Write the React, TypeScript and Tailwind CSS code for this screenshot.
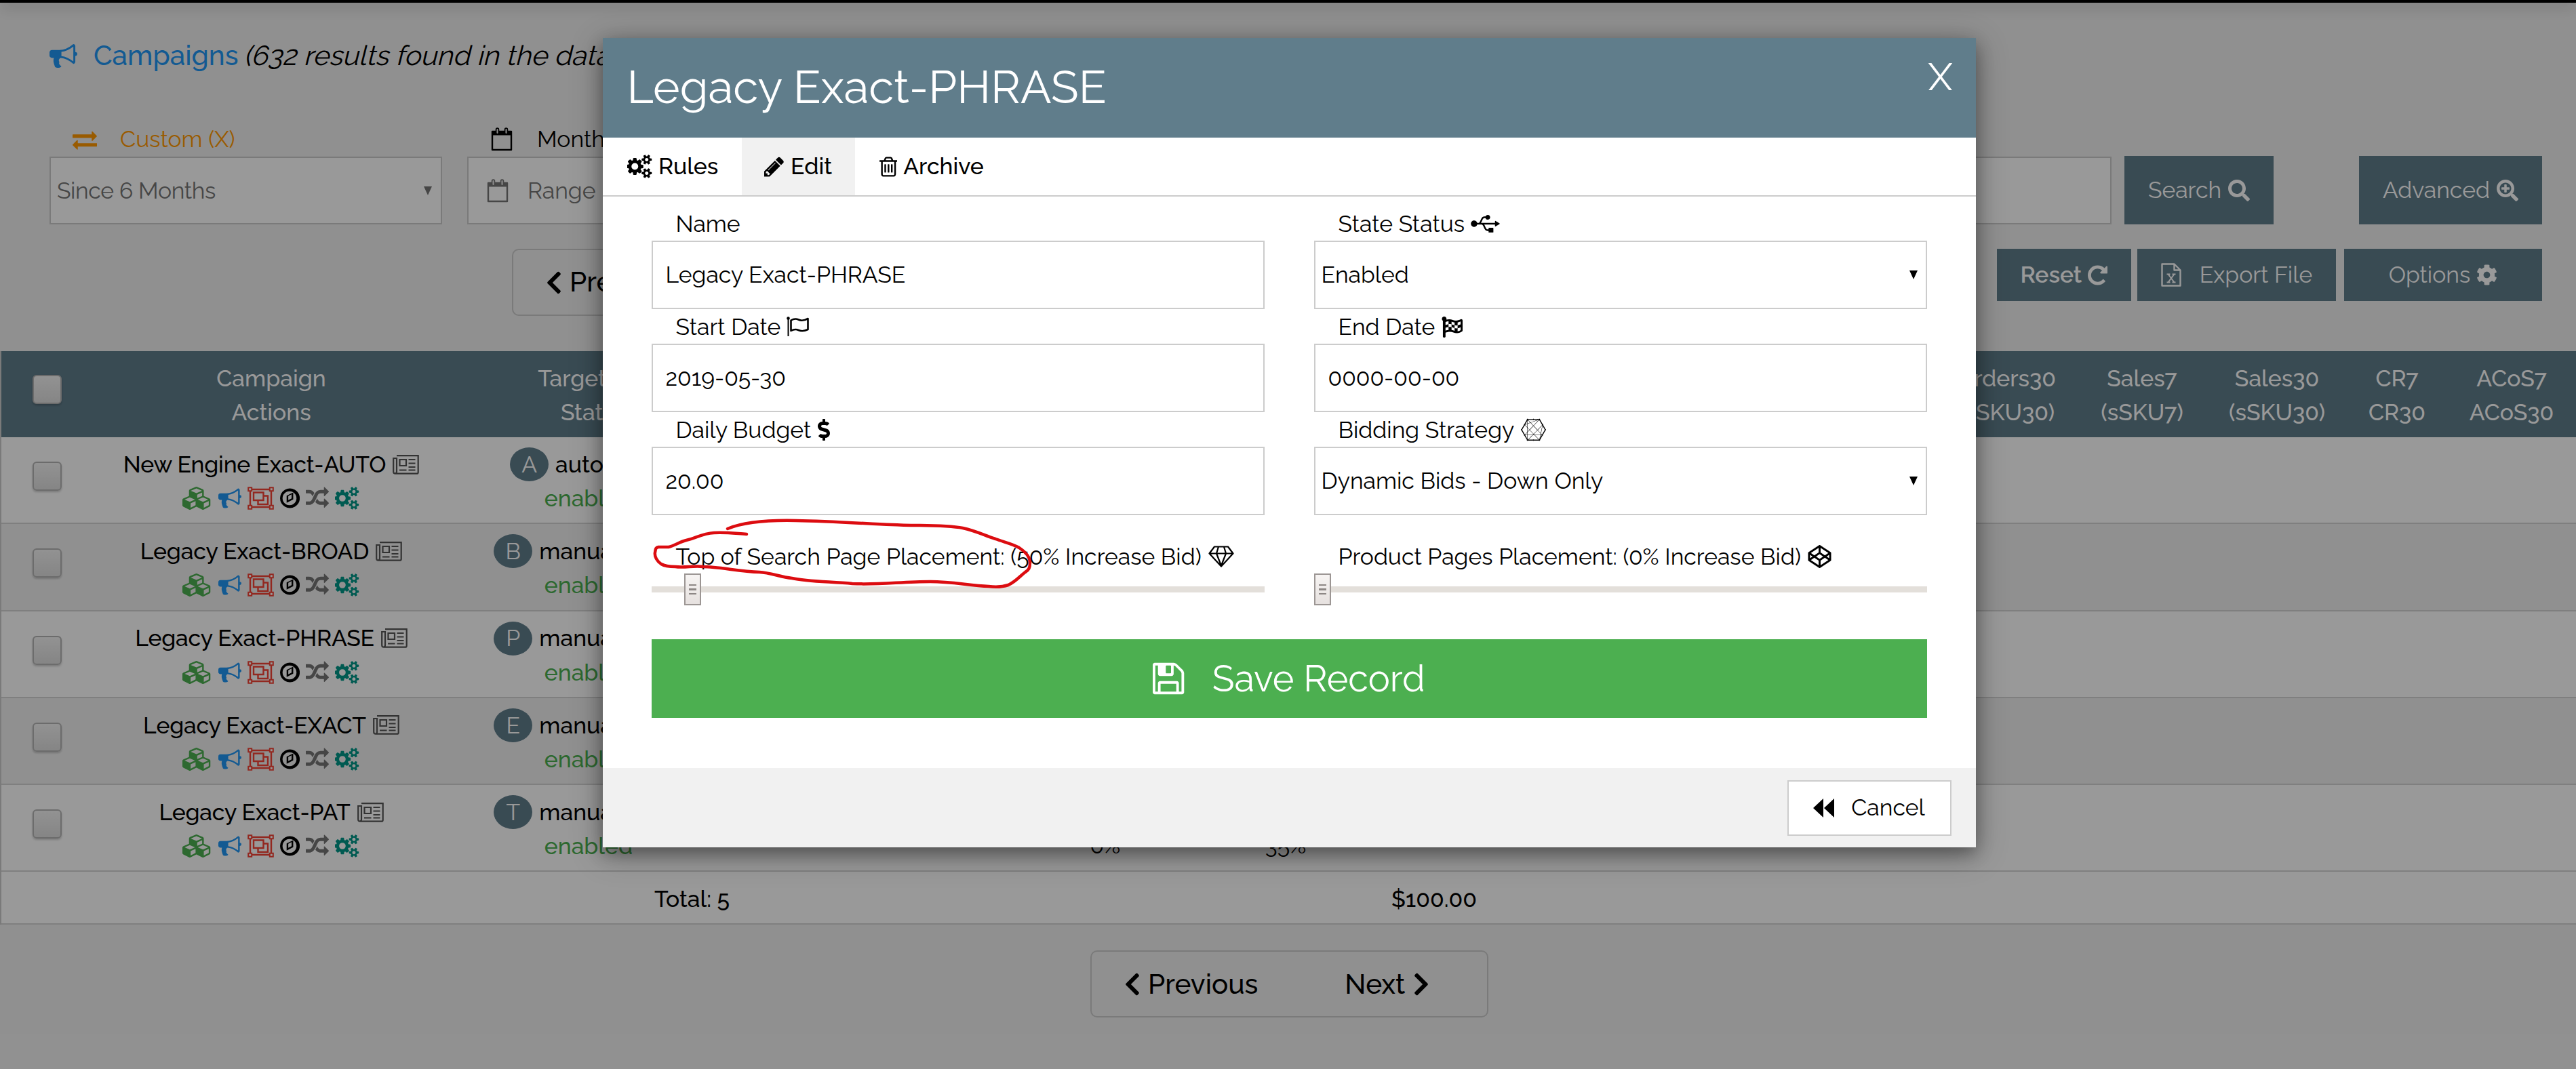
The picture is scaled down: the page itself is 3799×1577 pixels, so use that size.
import React from 'react';
import clsx from 'clsx';
import {
  FaChevronLeft,
  FaChevronRight,
  FaCodepen,
  FaCog,
  FaConnectdevelop,
  FaDollarSign,
  FaFlagCheckered,
  FaSearch,
  FaSearchPlus,
  FaUsb,
} from 'react-icons/fa';

const glyphs = {
  bullhorn: {
    box: '0 0 1792 1792',
    d: 'M1664 640q53 0 90.500 37.500t37.500 90.500-37.500 90.500-90.500 37.500v384q0 52-38 90t-90 38q-417-347-812-380-58 19-91 66t-31 100.500 40 92.500q-20 33-23 65.500t6 58 33.500 55 48 50 61.500 50.500q-29 58-111.500 83t-168.500 11.500-132-55.500q-7-23-29.500-87.500t-32-94.500-23-89-15-101 3.500-98.500 22-110.500h-122q-66 0-113-47t-47-113v-192q0-66 47-113t113-47h480q435 0 896-384 52 0 90 38t38 90v384zm-128 604v-954q-394 302-768 343v270q377 42 768 341z',
  },
  exchange: {
    box: '0 0 1792 1792',
    d: 'M1792 1184v192q0 13-9.500 22.500t-22.500 9.500h-1376v192q0 13-9.500 22.500t-22.500 9.500q-12 0-24-10l-319-320q-9-9-9-22 0-14 9-23l320-320q9-9 23-9 13 0 22.500 9.500t9.500 22.500v192h1376q13 0 22.500 9.500t9.500 22.500zm0-544q0 14-9 23l-320 320q-9 9-23 9-13 0-22.500-9.500t-9.500-22.500v-192h-1376q-13 0-22.500-9.500t-9.500-22.500v-192q0-13 9.500-22.500t22.500-9.500h1376v-192q0-14 9-23t23-9q12 0 24 10l319 319q9 9 9 23z',
  },
  cubes: {
    box: '0 0 2304 1792',
    d: 'M640 1632l384-192v-314l-384 164v342zm-64-454l404-173-404-173-404 173zm1088 454l384-192v-314l-384 164v342zm-64-454l404-173-404-173-404 173zm-448-293l384-165v-266l-384 164v267zm-64-379l441-189-441-189-441 189zm1088 518v416q0 36-19 67t-52 47l-448 224q-25 14-57 14t-57-14l-448-224q-4-2-7-4-2 2-7 4l-448 224q-25 14-57 14t-57-14l-448-224q-33-16-52-47t-19-67v-416q0-38 21.500-70t56.500-48l434-186v-400q0-38 21.500-70t56.500-48l448-192q23-10 50-10t50 10l448 192q35 16 56.500 48t21.500 70v400l434 186q36 16 57 48t21 70z',
  },
  cogs: {
    box: '0 0 1920 1792',
    d: 'M832 896q0-106-75-181t-181-75-181 75-75 181 75 181 181 75 181-75 75-181zm768 512q0-52-38-90t-90-38-90 38-38 90q0 53 37.500 90.500t90.500 37.500 90.500-37.500 37.500-90.500zm0-1024q0-52-38-90t-90-38-90 38-38 90q0 53 37.500 90.500t90.500 37.500 90.500-37.500 37.500-90.500zm-384 421v185q0 10-7 19.500t-16 10.500l-155 24q-11 35-32 76 34 48 90 115 7 11 7 20 0 12-7 19-23 30-82.500 89.500t-78.500 59.500q-11 0-21-7l-115-90q-37 19-77 31-11 108-23 155-7 24-30 24h-186q-11 0-20-7.500t-10-17.500l-23-153q-34-10-75-31l-118 89q-7 7-20 7-11 0-21-8-144-133-144-160 0-9 7-19 10-14 41-53t47-61q-23-44-35-82l-152-24q-10-1-17-9.500t-7-19.500v-185q0-10 7-19.500t16-10.500l155-24q11-35 32-76-34-48-90-115-7-11-7-20 0-12 7-20 22-30 82-89t79-59q11 0 21 7l115 90q34-18 77-32 11-108 23-154 7-24 30-24h186q11 0 20 7.500t10 17.500l23 153q34 10 75 31l118-89q8-7 20-7 11 0 21 8 144 133 144 160 0 8-7 19-12 16-42 54t-45 60q23 48 34 82l152 23q10 2 17 10.500t7 19.500zm640 533v140q0 16-149 31-12 27-30 52 51 113 51 138 0 4-4 7-122 71-124 71-8 0-46-47t-52-68q-20 2-30 2t-30-2q-14 21-52 68t-46 47q-2 0-124-71-4-3-4-7 0-25 51-138-18-25-30-52-149-15-149-31v-140q0-16 149-31 13-29 30-52-51-113-51-138 0-4 4-7 4-2 35-20t59-34 30-16q8 0 46 46.500t52 67.500q20-2 30-2t30 2q51-71 92-112l6-2q4 0 124 70 4 3 4 7 0 25-51 138 17 23 30 52 149 15 149 31zm0-1024v140q0 16-149 31-12 27-30 52 51 113 51 138 0 4-4 7-122 71-124 71-8 0-46-47t-52-68q-20 2-30 2t-30-2q-14 21-52 68t-46 47q-2 0-124-71-4-3-4-7 0-25 51-138-18-25-30-52-149-15-149-31v-140q0-16 149-31 13-29 30-52-51-113-51-138 0-4 4-7 4-2 35-20t59-34 30-16q8 0 46 46.500t52 67.500q20-2 30-2t30 2q51-71 92-112l6-2q4 0 124 70 4 3 4 7 0 25-51 138 17 23 30 52 149 15 149 31z',
  },
  compass: {
    box: '128 0 1536 1792',
    d: 'M768 1042l256-128v-316l-256 128v316zm384-594v542l-512 256v-542zm256 448q0-148-73-273t-198-198-273-73-273 73-198 198-73 273 73 273 198 198 273 73 273-73 198-198 73-273zm256 0q0 209-103 385.500t-279.500 279.500-385.500 103-385.500-103-279.500-279.500-103-385.500 103-385.500 279.500-279.500 385.500-103 385.500 103 279.500 279.500 103 385.500z',
  },
  random: {
    box: '0 0 1792 1792',
    d: 'M666 481q-60 92-137 273-22-45-37-72.500t-40.500-63.500-51-56.500-63-35-81.500-14.500h-224q-14 0-23-9t-9-23v-192q0-14 9-23t23-9h224q250 0 410 225zm1126 799q0 14-9 23l-320 320q-9 9-23 9-13 0-22.500-9.500t-9.500-22.500v-192q-32 0-85 .5t-81 1-73-1-71-5-64-10.500-63-18.500-58-28.500-59-40-55-53.500-56-69.500q59-93 136-273 22 45 37 72.500t40.500 63.500 51 56.500 63 35 81.500 14.500h256v-192q0-14 9-23t23-9q12 0 24 10l319 319q9 9 9 23zm0-896q0 14-9 23l-320 320q-9 9-23 9-13 0-22.500-9.500t-9.500-22.500v-192h-256q-48 0-87 15t-69 45-51 61.500-45 77.500q-32 62-78 171-29 66-49.500 111t-54 105-64 100-74 83-90 68.500-106.500 42-128 16.500h-224q-14 0-23-9t-9-23v-192q0-14 9-23t23-9h224q48 0 87-15t69-45 51-61.500 45-77.500q32-62 78-171 29-66 49.500-111t54-105 64-100 74-83 90-68.500 106.500-42 128-16.500h256v-192q0-14 9-23t23-9q12 0 24 10l319 319q9 9 9 23z',
  },
  repeat: {
    box: '128 0 1536 1792',
    d: 'M1664 256v448q0 26-19 45t-45 19h-448q-42 0-59-40-17-39 14-69l138-138q-148-137-349-137-104 0-198.500 40.500t-163.500 109.500-109.500 163.500-40.500 198.500 40.500 198.500 109.500 163.500 163.500 109.500 198.500 40.500q119 0 225-52t179-147q7-10 23-12 15 0 25 9l137 138q9 8 9.500 20.500t-7.500 22.500q-109 132-264 204.500t-327 72.500q-156 0-298-61t-245-164-164-245-61-298 61-298 164-245 245-164 298-61q147 0 284.500 55.500t244.500 156.500l130-129q29-31 70-14 39 17 39 59z',
  },
  pencil: {
    box: '128 0 1536 1792',
    d: 'M491 1536l91-91-235-235-91 91v107h128v128h107zm523-928q0-22-22-22-10 0-17 7l-542 542q-7 7-7 17 0 22 22 22 10 0 17-7l542-542q7-7 7-17zm-54-192l416 416-832 832h-416v-416zm683 96q0 53-37 90l-166 166-416-416 166-165q36-38 90-38 53 0 91 38l235 234q37 39 37 91z',
  },
  trash: {
    box: '192 0 1408 1792',
    d: 'M704 736v576q0 14-9 23t-23 9h-64q-14 0-23-9t-9-23v-576q0-14 9-23t23-9h64q14 0 23 9t9 23zm256 0v576q0 14-9 23t-23 9h-64q-14 0-23-9t-9-23v-576q0-14 9-23t23-9h64q14 0 23 9t9 23zm256 0v576q0 14-9 23t-23 9h-64q-14 0-23-9t-9-23v-576q0-14 9-23t23-9h64q14 0 23 9t9 23zm128 724v-948h-896v948q0 22 7 40.500t14.500 27 10.500 8.500h832q3 0 10.500-8.500t14.500-27 7-40.500zm-672-1076h448l-48-117q-7-9-17-11h-317q-10 2-17 11zm928 32v64q0 14-9 23t-23 9h-96v948q0 83-47 143.500t-113 60.500h-832q-66 0-113-58.500t-47-141.500v-952h-96q-14 0-23-9t-9-23v-64q0-14 9-23t23-9h309l70-167q15-37 54-63t79-26h320q40 0 79 26t54 63l70 167h309q14 0 23 9t9 23z',
  },
  save: {
    box: '128 0 1536 1792',
    d: 'M512 1536h768v-384h-768v384zm896 0h128v-896q0-14-10-38.500t-20-34.500l-281-281q-10-10-34-20t-39-10v416q0 40-28 68t-68 28h-576q-40 0-68-28t-28-68v-416h-128v1280h128v-416q0-40 28-68t68-28h832q40 0 68 28t28 68v416zm-384-928v-320q0-13-9.500-22.500t-22.500-9.500h-192q-13 0-22.500 9.500t-9.500 22.500v320q0 13 9.500 22.500t22.500 9.500h192q13 0 22.500-9.500t9.500-22.500zm640 32v928q0 40-28 68t-68 28h-1344q-40 0-68-28t-28-68v-1344q0-40 28-68t68-28h928q40 0 88 20t76 48l280 280q28 28 48 76t20 88z',
  },
};

const Glyph = ({ name, className }: { name: keyof typeof glyphs; className?: string }) => (
  <svg viewBox={glyphs[name].box} fill="currentColor" className={clsx('w-auto shrink-0', className || 'h-[34px]')}>
    <path d={glyphs[name].d} />
  </svg>
);

const Newspaper = () => (
  <svg viewBox="0 0 39 29" fill="none" stroke="#555" strokeWidth="2.2" className="w-[39px] h-[29px] shrink-0">
    <path d="M6 1.200h31.700v24.500q0 2-2 2H4q-2.800 0-2.800-3V5H6v19.500q0 3-2.400 3" />
    <path d="M10.500 7h9.500v9h-9.500zM23.500 7h10M23.500 12.500h10M23.500 18h10M10 22.500h10.500M23.500 22.500h10" />
  </svg>
);

const CalendarIcon = () => (
  <svg viewBox="0 0 32 35" className="w-[32px] h-[35px] shrink-0" fill="none" stroke="currentColor">
    <path d="M2 6h28v27H2z" strokeWidth="2.400" strokeLinejoin="round" />
    <path d="M1 5.500h30v6H1z" fill="currentColor" stroke="none" />
    <path d="M9.500 3v5M22.500 3v5" strokeWidth="5.500" strokeLinecap="round" />
    <path d="M9.500 3v5M22.500 3v5" strokeWidth="2" stroke="#eee" strokeLinecap="round" />
  </svg>
);

const ObjectGroup = () => (
  <svg viewBox="0 0 39 34" className="w-[39px] h-[34px] shrink-0" fill="none" stroke="currentColor" strokeWidth="2.400">
    <path d="M4 4h31v26H4z" />
    <path d="M9 8.500h14.500v11.500H9zM23.500 13.500h6.500v12.500H15.500v-6" />
    <path d="M1.200 1.200h5v5h-5zM32.800 1.200h5v5h-5zM1.200 27.800h5v5h-5zM32.800 27.800h5v5h-5z" fill="#fff" strokeWidth="2" />
  </svg>
);

const FlagIcon = () => (
  <svg viewBox="0 0 34 30" className="w-[34px] h-[30px] shrink-0" fill="none" stroke="currentColor">
    <path d="M2.500 1v28" strokeWidth="2" />
    <circle cx="2.500" cy="2.500" r="2.300" fill="currentColor" stroke="none" />
    <path d="M6.500 5.500q6-3.500 11-1 6 3 14-1.500v16q-8 4-14 1-5-2.500-11 1z" strokeWidth="2.600" strokeLinejoin="round" />
  </svg>
);

const Diamond = () => (
  <svg viewBox="0 0 38 32" className="w-[38px] h-[32px] shrink-0" fill="none" stroke="currentColor" strokeWidth="2.200" strokeLinejoin="round">
    <path d="M9 1.500h20l7.500 10L19 30.500 1.500 11.500zM1.500 11.500h35M12 11.500l7 18 7-18-3-10M12 11.500l3-10" />
  </svg>
);

const ExcelFile = () => (
  <svg viewBox="0 0 30 35" className="w-[30px] h-[35px] shrink-0" fill="none" stroke="currentColor" strokeWidth="2.400">
    <path d="M1.500 1.500h18l9 9v23h-27zM19.500 1.500v9h9" strokeLinejoin="round" />
    <path d="M10.500 16.500l9 12M19.500 16.500l-9 12M8.500 16.500h5M16.500 16.500h5M8.500 28.500h5M16.500 28.500h5" strokeWidth="2" />
  </svg>
);

const Rewind = () => (
  <svg viewBox="0 0 31 28" className="w-[31px] h-[28px] shrink-0" fill="currentColor">
    <path d="M15 0v28L0 14zM31 0v28L16 14z" />
  </svg>
);

const Caret = ({ className }: { className?: string }) => (
  <svg viewBox="0 0 12 13" className={clsx('w-[12px] h-[13px] shrink-0', className)} fill="currentColor">
    <path d="M0 0h12L6 13z" />
  </svg>
);

const Checkbox = () => (
  <div className="w-[43px] h-[43px] rounded-[6px] border-2 border-[#b4b4b4] bg-gradient-to-b from-[#f4f4f4] to-[#dedede] shadow-[0_2px_3px_rgba(0,0,0,0.2)]"></div>
);

const Pagination = () => (
  <div className="flex items-center w-[587px] h-[99px] rounded-[10px] border-2 border-[#ccc] pl-[47px] text-[40.500px] font-medium">
    <FaChevronLeft className="w-[26px] h-[38px]" />
    <span className="ml-[10px]">Previous</span>
    <span className="ml-[128px]">Next</span>
    <FaChevronRight className="ml-[11px] w-[26px] h-[38px]" />
  </div>
);

const campaigns = [
  { name: 'New Engine Exact-AUTO', badge: 'A', targeting: 'auto' },
  { name: 'Legacy Exact-BROAD', badge: 'B', targeting: 'manual' },
  { name: 'Legacy Exact-PHRASE', badge: 'P', targeting: 'manual' },
  { name: 'Legacy Exact-EXACT', badge: 'E', targeting: 'manual' },
  { name: 'Legacy Exact-PAT', badge: 'T', targeting: 'manual', cells: ['0%', '35%'] },
];

const metricHeads = [
  { top: 'Orders30', bottom: '(sSKU30)', width: 'w-[208px]' },
  { top: 'Sales7', bottom: '(sSKU7)', width: 'w-[192px]' },
  { top: 'Sales30', bottom: '(sSKU30)', width: 'w-[206px]' },
  { top: 'CR7', bottom: 'CR30', width: 'w-[148px]' },
  { top: 'ACoS7', bottom: 'ACoS30', width: 'w-[190px]' },
];

const HeadCell = ({ top, bottom, width }: { top: string; bottom: string; width: string }) => (
  <div className={clsx('flex flex-col items-center pt-[15px] leading-[50px] whitespace-nowrap', width)}>
    <span>{top}</span>
    <span>{bottom}</span>
  </div>
);

const CampaignTable = () => (
  <div className="mt-[51px] border-l-2 border-[#ccc] text-[33.750px] font-medium">
    <div className="flex h-[127px] bg-[#607d8b] text-white">
      <div className="w-[118px] pl-[46px] pt-[35px]">
        <Checkbox />
      </div>
      <HeadCell top="Campaign" bottom="Actions" width="w-[560px]" />
      <HeadCell top="Targeting" bottom="State" width="w-[376px]" />
      <div className="flex-1"></div>
      {metricHeads.map((head) => (
        <HeadCell key={head.top} {...head} />
      ))}
    </div>

    {campaigns.map((row, index) => (
      <div
        key={row.name}
        className={clsx('flex h-[128.300px] border-b-2 border-[#d4d4d4]', index % 2 ? 'bg-[#f1f1f1]' : 'bg-white')}
      >
        <div className="w-[118px] pl-[46px] pt-[36px]">
          <Checkbox />
        </div>
        <div className="w-[560px] pt-[15px] flex flex-col items-center">
          <div className="h-[50px] flex items-center gap-[10px] whitespace-nowrap">
            <span className="tracking-[-0.200px]">{row.name}</span>
            <Newspaper />
          </div>
          <div className="h-[50px] flex items-center gap-[9px]">
            <Glyph name="cubes" className="h-[34px] text-[#4caf50]" />
            <Glyph name="bullhorn" className="h-[34px] text-[#2196f3]" />
            <span className="text-[#f44336]"><ObjectGroup /></span>
            <Glyph name="compass" />
            <Glyph name="random" className="h-[34px] text-[#757575]" />
            <Glyph name="cogs" className="h-[34px] text-[#009688]" />
          </div>
        </div>
        <div className="w-[376px] pt-[15px] flex flex-col items-center">
          <div className="h-[50px] pr-[94px] flex items-center gap-[10px]">
            <span className="w-[57px] h-[50px] rounded-[50%] bg-[#607d8b] text-white font-normal flex items-center justify-center">{row.badge}</span>
            <span>{row.targeting}</span>
          </div>
          <span className="leading-[50px] text-[#4caf50]">enabled</span>
        </div>
        {row.cells && (
          <div className="flex items-end pb-[12px] font-normal leading-[50px]">
            <span className="w-[266px] ml-[441px] text-center">{row.cells[0]}</span>
            <span className="w-[266px] text-center">{row.cells[1]}</span>
          </div>
        )}
      </div>
    ))}

    <div className="flex h-[78px] pt-[3px] items-center bg-white border-b-2 border-[#d4d4d4]">
      <span className="w-[1074px] text-right">Total: 5</span>
      <span className="w-[1102px] text-right">$100.00</span>
    </div>
  </div>
);

const Page = () => (
  <div className="flex flex-col">
    <div className="h-[4px] bg-black shadow-[0_4px_22px_rgba(0,0,0,0.45)]"></div>
    <div className="mt-[48px] h-[60px] pl-[73px] flex items-center text-[40.500px]">
      <Glyph name="bullhorn" className="h-[41px] text-[#2196f3]" />
      <span className="ml-[24px] text-[#2196f3] font-medium">Campaigns</span>
      <span className="ml-[12px] -skew-x-14 whitespace-nowrap">(632 results found in the data</span>
    </div>

    <div className="mt-[68px] pl-[73px] pr-[50px] flex items-end text-[33.750px]">
      <div className="w-[579px]">
        <div className="h-[51px] pl-[34px] flex items-center text-[#ff9800]">
          <Glyph name="exchange" className="h-[36px]" />
          <span className="ml-[34px]">Custom (X)</span>
        </div>
        <div className="h-[100px] border-2 border-[#ccc] bg-white text-[#757575] pl-[9px] pr-[13px] flex items-center justify-between">
          <span className="tracking-[-0.400px]">Since 6 Months</span>
          <Caret />
        </div>
      </div>
      <div className="ml-[37px] w-[560px]">
        <div className="h-[51px] pl-[35px] flex items-center">
          <CalendarIcon />
          <span className="ml-[36px]">Month</span>
        </div>
        <div className="h-[100px] border-2 border-[#ccc] bg-white text-[#757575] pl-[27px] flex items-center">
          <CalendarIcon />
          <span className="ml-[28px]">Range</span>
        </div>
      </div>
      <div className="ml-[37px] flex-1 h-[100px] border-2 border-[#ccc] bg-white"></div>
      <button className="ml-[19px] w-[220px] h-[101px] bg-[#607d8b] text-white flex items-center justify-center gap-[10px]">
        Search <FaSearch className="w-[32px] h-[32px]" />
      </button>
      <button className="ml-[126px] w-[270px] h-[101px] bg-[#607d8b] text-white flex items-center justify-center gap-[10px]">
        Advanced <FaSearchPlus className="w-[32px] h-[32px]" />
      </button>
    </div>

    <div className="mt-[36px] h-[100px] pl-[755px] pr-[50px] flex items-start text-[33.750px]">
      <Pagination />
      <div className="ml-auto flex text-white">
        <button className="w-[198px] h-[77px] bg-[#607d8b] font-semibold flex items-center justify-center gap-[9px]">
          Reset <Glyph name="repeat" />
        </button>
        <button className="ml-[9px] w-[293px] h-[77px] bg-[#607d8b] flex items-center justify-center gap-[27px] whitespace-nowrap">
          <ExcelFile /> Export File
        </button>
        <button className="ml-[12px] w-[292px] h-[77px] bg-[#607d8b] flex items-center justify-center gap-[9px]">
          Options <FaCog className="w-[31px] h-[31px]" />
        </button>
      </div>
    </div>

    <CampaignTable />

    <div className="mt-[38px] flex justify-center pl-[4px]">
      <Pagination />
    </div>
  </div>
);

type FieldProps = { label: string; value: string; icon?: React.ReactNode; select?: boolean };

const Field = ({ label, value, icon, select }: FieldProps) => (
  <div>
    <div className="h-[51px] pt-px pl-[36px] flex items-center gap-[9px]">
      <span>{label}</span>
      {icon}
    </div>
    <div className={clsx('h-[101px] border-2 border-[#ccc] bg-white flex items-center justify-between', select ? 'pl-[9px] pr-[12px]' : 'pl-[19px]')}>
      <span>{value}</span>
      {select && <Caret />}
    </div>
  </div>
);

const Slider = ({ label, icon, value }: { label: string; icon: React.ReactNode; value: number }) => (
  <div>
    <div className="h-[50px] pl-[36px] flex items-center gap-[10px] whitespace-nowrap">
      <span>{label}</span>
      {icon}
    </div>
    <div className="relative h-[47px] flex items-center">
      <div className="w-full h-[9px] bg-[#e3dfda]"></div>
      <div
        className="absolute top-0 w-[25px] h-[47px] border-2 border-[#9c9694] bg-gradient-to-b from-[#f7f4f3] to-[#e6e1df] flex flex-col items-center justify-center gap-[4px]"
        style={{ left: `calc((100% - 25px) * ${value / 900})` }}
      >
        <span className="w-[11px] h-[2.500px] bg-[#8d8785]"></span>
        <span className="w-[11px] h-[2.500px] bg-[#8d8785]"></span>
        <span className="w-[11px] h-[2.500px] bg-[#8d8785]"></span>
      </div>
    </div>
  </div>
);

const EditModal = () => (
  <div className="w-[2025px] bg-white text-[33.750px] shadow-[0_9px_23px_rgba(0,0,0,0.3),0_9px_45px_rgba(0,0,0,0.3)]">
    <div className="h-[147px] bg-[#607d8b] text-white flex justify-between pl-[36px] pr-[34px]">
      <span className="text-[67.500px] leading-[145px]">Legacy Exact-PHRASE</span>
      <span className="text-[57px] leading-[114px]">X</span>
    </div>
    <div className="h-[87px] flex border-b-2 border-[#ccc] font-medium">
      <div className="w-[205px] pl-[36px] flex items-center gap-[9px]">
        <Glyph name="cogs" className="h-[35px]" /> Rules
      </div>
      <div className="w-[167px] bg-[#f1f1f1] flex items-center justify-center gap-[10px]">
        <Glyph name="pencil" /> Edit
      </div>
      <div className="pl-[36px] flex items-center gap-[9px]">
        <Glyph name="trash" /> Archive
      </div>
    </div>

    <div className="px-[72px] pt-[14px] pb-[74px]">
      <div className="grid grid-cols-2 gap-x-[73px]">
        <Field label="Name" value="Legacy Exact-PHRASE" />
        <Field label="State Status" value="Enabled" select icon={<FaUsb className="w-[43px] h-[34px]" />} />
        <Field label="Start Date" value="2019-05-30" icon={<FlagIcon />} />
        <Field label="End Date" value="0000-00-00" icon={<FaFlagCheckered className="w-[33px] h-[31px]" />} />
        <Field label="Daily Budget" value="20.00" icon={<FaDollarSign className="w-[20px] h-[32px]" />} />
        <Field label="Bidding Strategy" value="Dynamic Bids - Down Only" select icon={<FaConnectdevelop className="w-[39px] h-[36px]" />} />
      </div>
      <div className="mt-[36px] grid grid-cols-2 gap-x-[73px]">
        <Slider label="Top of Search Page Placement: (50% Increase Bid)" icon={<Diamond />} value={50} />
        <Slider label="Product Pages Placement: (0% Increase Bid)" icon={<FaCodepen className="w-[35px] h-[34px]" />} value={0} />
      </div>
      <button className="mt-[50px] w-full h-[116px] bg-[#4caf50] text-white text-[54px] flex items-center justify-center gap-[41px]">
        <Glyph name="save" className="h-[54px]" />
        <span>Save Record</span>
      </button>
    </div>

    <div className="h-[117px] bg-[#f1f1f1] flex items-center justify-end pr-[36px]">
      <button className="w-[242px] h-[82px] border-2 border-[#ccc] bg-white flex items-center justify-center gap-[25px]">
        <Rewind /> Cancel
      </button>
    </div>
  </div>
);

// Hand-drawn marker around the placement label
const Marker = () => (
  <svg viewBox="950 755 590 125" className="absolute left-[950px] top-[755px] w-[590px] h-[125px]" fill="none" stroke="#dc0c10" strokeWidth="4.500" strokeLinecap="round" strokeLinejoin="round">
    <path d="M1073 780C1095 771 1130 767 1174 768C1225 769 1270 772 1315 774C1355 776 1392 774 1420 779C1442 784 1452 790 1468 795C1482 800 1495 803 1503 808C1512 814 1519 821 1519 830C1519 838 1517 841 1512 844C1504 850 1498 858 1487 863C1478 866 1466 866 1458 865C1430 864 1405 858 1372 858C1330 858 1295 863 1257 861C1225 858 1190 858 1168 853C1150 851 1137 845 1120 844C1090 843 1060 836 1037 836C1023 834 1010 838 996 836C985 836 980 835 975 832C969 828 965 821 966 815C967 811 966 808 971 807H986C995 805 1003 799 1012 797C1026 794 1035 787 1053 786C1070 785 1085 787 1101 788" />
  </svg>
);

const App = () => {
  return (
    <div className="relative w-[3799px] h-[1577px] overflow-hidden bg-[#f1f1f1] text-black font-['Raleway','Lato',sans-serif]">
      <Page />
      <div className="absolute inset-0 bg-black/40 flex justify-center items-start pt-[56px] pl-[3px]">
        <EditModal />
      </div>
      <Marker />
    </div>
  );
};

export default App;
